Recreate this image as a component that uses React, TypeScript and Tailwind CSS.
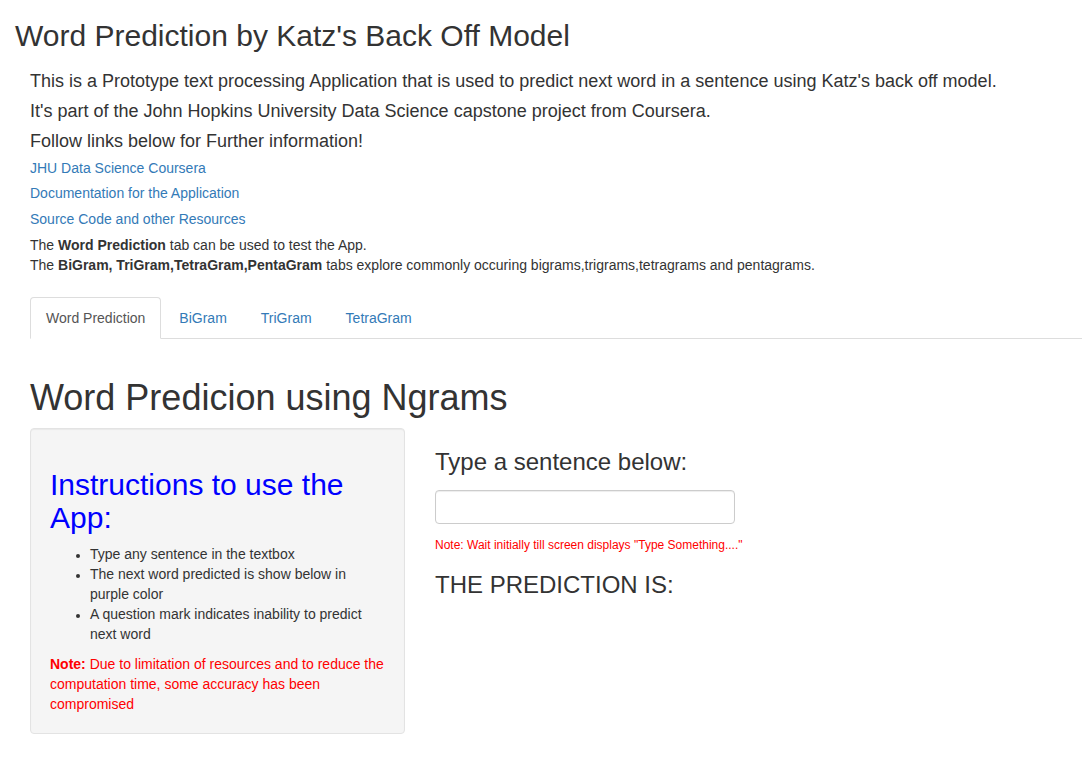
import React from "react";

const tabs = ["Word Prediction", "BiGram", "TriGram", "TetraGram"];

const links = [
  "JHU Data Science Coursera",
  "Documentation for the Application",
  "Source Code and other Resources",
];

function Tabs({ active }: { active: string }) {
  return (
    <ul className="mt-[22px] flex border-b border-[#ddd]">
      {tabs.map((t) => (
        <li key={t} className="-mb-px mr-[2px]">
          <a
            href="#"
            className={
              t === active
                ? "block rounded-t border border-[#ddd] border-b-transparent bg-white px-[15px] py-[10px] leading-5 text-[#555]"
                : "block rounded-t border border-transparent px-[15px] py-[10px] leading-5 text-[#337ab7]"
            }
          >
            {t}
          </a>
        </li>
      ))}
    </ul>
  );
}

function Sidebar() {
  return (
    <div className="w-[375px] shrink-0 rounded border border-[#e3e3e3] bg-[#f5f5f5] p-[19px] shadow-[inset_0_1px_1px_rgba(0,0,0,0.05)]">
      <h2 className="mt-5 mb-[10px] text-[30px] leading-[33px] text-[#0000ff]">Instructions to use the App:</h2>
      <ul className="mb-[10px] list-disc pl-10 marker:text-[12px]">
        <li>Type any sentence in the textbox</li>
        <li>The next word predicted is show below in purple color</li>
        <li>A question mark indicates inability to predict next word</li>
      </ul>
      <p className="text-[#ff0000]">
        <strong>Note:</strong> Due to limitation of resources and to reduce the computation time, some accuracy has been compromised
      </p>
    </div>
  );
}

function MainPanel() {
  return (
    <div className="pl-[30px]">
      <h3 className="mt-[21px] mb-[15px] text-[24px] leading-[26.4px]">Type a sentence below:</h3>
      <input
        type="text"
        className="block h-[34px] w-[300px] rounded border border-[#ccc] bg-white px-3 shadow-[inset_0_1px_1px_rgba(0,0,0,0.075)] outline-none"
      />
      <p className="mt-[13px] text-[12px] leading-[17px] text-[#ff0000]">
        Note: Wait initially till screen displays "Type Something...."
      </p>
      <h3 className="mt-[18px] text-[24px] leading-[26.4px]">THE PREDICTION IS:</h3>
    </div>
  );
}

export default function App() {
  return (
    <div className="min-h-[771px] bg-white pl-[15px] font-['Liberation_Sans',Arial,sans-serif] text-[14px] leading-5 text-[#333]">
      <h2 className="mt-[19px] text-[30px] leading-[33px]">Word Prediction by Katz's Back Off Model</h2>
      <div className="pl-[15px]">
        <div className="mt-[19px] flex flex-col gap-[10px] text-[18px] leading-5">
          <div>This is a Prototype text processing Application that is used to predict next word in a sentence using Katz's back off model.</div>
          <div>It's part of the John Hopkins University Data Science capstone project from Coursera.</div>
          <div>Follow links below for Further information!</div>
        </div>
        <div className="mt-[10px] flex flex-col gap-[10px] leading-[15.4px]">
          {links.map((l) => (
            <a key={l} href="#" className="text-[#337ab7]">
              {l}
            </a>
          ))}
        </div>
        <p className="mt-[8px]">
          The <strong>Word Prediction</strong> tab can be used to test the App.
          <br />
          The <strong>BiGram, TriGram,TetraGram,PentaGram</strong> tabs explore commonly occuring bigrams,trigrams,tetragrams and pentagrams.
        </p>
        <Tabs active="Word Prediction" />
        <h1 className="mt-[39px] mb-[10px] text-[36px] leading-[39.6px]">Word Predicion using Ngrams</h1>
        <div className="flex items-start">
          <Sidebar />
          <MainPanel />
        </div>
      </div>
    </div>
  );
}
